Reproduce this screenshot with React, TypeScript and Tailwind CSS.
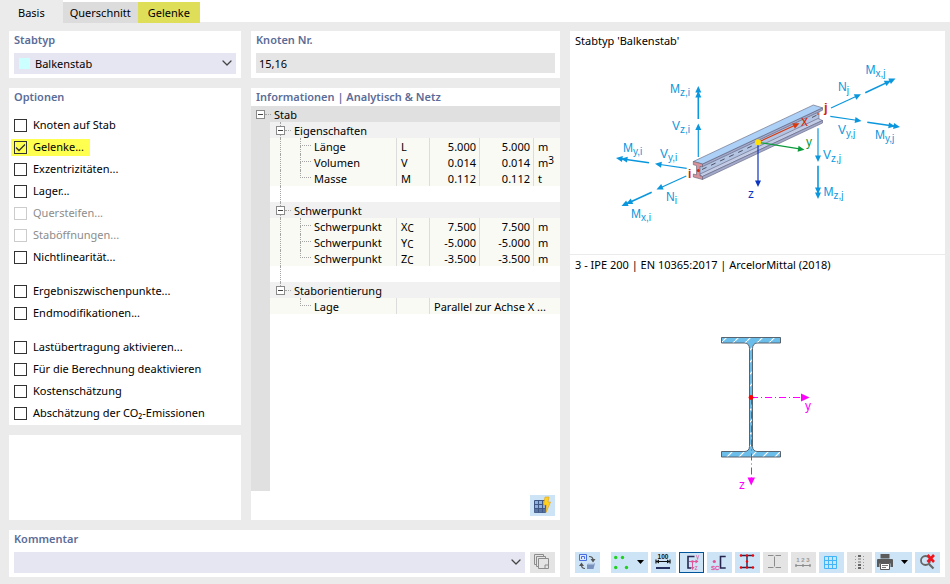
import React, { useState } from 'react';
import clsx from 'clsx';
import { ChevronDown } from 'lucide-react';

type Option = { id: string; label: string; disabled?: boolean; checked?: boolean };

const optionGroups: Option[][] = [
  [
    { id: 'nodes', label: 'Knoten auf Stab' },
    { id: 'hinges', label: 'Gelenke...', checked: true },
    { id: 'ecc', label: 'Exzentrizitäten...' },
    { id: 'support', label: 'Lager...' },
    { id: 'stiffener', label: 'Quersteifen...', disabled: true },
    { id: 'openings', label: 'Staböffnungen...', disabled: true },
    { id: 'nonlinear', label: 'Nichtlinearität...' },
  ],
  [
    { id: 'results', label: 'Ergebniszwischenpunkte...' },
    { id: 'ends', label: 'Endmodifikationen...' },
  ],
  [
    { id: 'load', label: 'Lastübertragung aktivieren...' },
    { id: 'deactivate', label: 'Für die Berechnung deaktivieren' },
    { id: 'cost', label: 'Kostenschätzung' },
    { id: 'co2', label: 'Abschätzung der CO₂-Emissionen' },
  ],
];

type InfoRow = { name: string; symbol: string; sub?: string; a: string; b: string; unit: string; sup?: string };

const infoGroups: { title: string; rows: InfoRow[] }[] = [
  {
    title: 'Eigenschaften',
    rows: [
      { name: 'Länge', symbol: 'L', a: '5.000', b: '5.000', unit: 'm' },
      { name: 'Volumen', symbol: 'V', a: '0.014', b: '0.014', unit: 'm', sup: '3' },
      { name: 'Masse', symbol: 'M', a: '0.112', b: '0.112', unit: 't' },
    ],
  },
  {
    title: 'Schwerpunkt',
    rows: [
      { name: 'Schwerpunkt', symbol: 'X', sub: 'C', a: '7.500', b: '7.500', unit: 'm' },
      { name: 'Schwerpunkt', symbol: 'Y', sub: 'C', a: '-5.000', b: '-5.000', unit: 'm' },
      { name: 'Schwerpunkt', symbol: 'Z', sub: 'C', a: '-3.500', b: '-3.500', unit: 'm' },
    ],
  },
];

function Panel({ className, children }: { className?: string; children?: React.ReactNode }) {
  return <section className={clsx('bg-white', className)}>{children}</section>;
}

function Heading({ children }: { children: React.ReactNode }) {
  return <h2 className="flex h-[18px] items-center px-[5px] font-semibold text-[#5b6c98]">{children}</h2>;
}

function OptionRow({ option }: { option: Option }) {
  const [checked, setChecked] = useState(!!option.checked);
  return (
    <div className="flex h-[22px] items-center">
      <label
        className={clsx(
          'flex h-[17px] items-center gap-[6px] pr-[6px] pl-[3px]',
          option.checked && 'bg-[#ffff4f]',
          option.disabled && 'text-[#8c8c8c]',
        )}
      >
        <span className="relative flex">
          <input
            type="checkbox"
            disabled={option.disabled}
            checked={checked}
            onChange={(e) => setChecked(e.target.checked)}
            className="peer size-[13px] appearance-none border border-[#333] disabled:border-[#ccc]"
          />
          <svg viewBox="0 0 13 13" className="pointer-events-none absolute inset-0 hidden size-[13px] peer-checked:block">
            <path d="M2 6.5 5 9.5 11 3.5" fill="none" stroke="#333" strokeWidth="1.3" />
          </svg>
        </span>
        {option.label}
      </label>
    </div>
  );
}

function Chevron() {
  return (
    <ChevronDown
      className="pointer-events-none absolute top-[2px] right-px size-4"
      strokeWidth={1.9}
      color="#444"
    />
  );
}

/* ---------- property tree ---------- */

function Minus() {
  return (
    <span className="flex size-[9px] items-center border border-[#8a8a8a] bg-white px-px">
      <span className="h-px w-full bg-[#444]" />
    </span>
  );
}

function GroupRow({ title, last }: { title: string; last?: boolean }) {
  return (
    <tr>
      <td className="bg-[#e0e0e0] p-0" />
      <th colSpan={5} className="bg-[#f1f1f1] p-0 text-left font-normal">
        <div className="flex h-4 items-center pl-[6px]">
          <span className="flex h-4 flex-col items-center">
            <span className="h-1 border-l border-dotted border-[#a5a5a5]" />
            <Minus />
            {!last && <span className="h-[3px] border-l border-dotted border-[#a5a5a5]" />}
          </span>
          <span className="mr-[3px] w-[6px] border-b border-dotted border-[#a5a5a5]" />
          <span className="self-start">{title}</span>
        </div>
      </th>
    </tr>
  );
}

function Branch({ trunk, last }: { trunk: boolean; last: boolean }) {
  return (
    <span className="flex h-4 pl-[10px]">
      <span className={clsx('w-5 border-l border-dotted', trunk ? 'border-[#a5a5a5]' : 'border-transparent')} />
      <span className="mr-[3px] w-[11px]">
        <span className="block h-2 border-b border-l border-dotted border-[#a5a5a5]" />
        {!last && <span className="block h-2 border-l border-dotted border-[#a5a5a5]" />}
      </span>
    </span>
  );
}

const dataCell = 'border-l border-[#dcdcdc] bg-[#f9faf4] p-0';

function InfoTable() {
  return (
    <table className="w-full table-fixed border-separate border-spacing-0 leading-[18px]">
      <colgroup>
        <col className="w-[19px]" />
        <col />
        <col className="w-[33px]" />
        <col className="w-[50px]" />
        <col className="w-[54px]" />
        <col className="w-[27px]" />
      </colgroup>
      <tbody>
        <tr>
          <th colSpan={6} className="bg-[#e0e0e0] p-0 text-left font-normal">
            <div className="flex h-4 items-center pl-[5px]">
              <Minus />
              <span className="mr-[3px] w-[6px] border-b border-dotted border-[#a5a5a5]" />
              <span className="self-start">Stab</span>
            </div>
          </th>
        </tr>
        {infoGroups.map((group) => (
          <React.Fragment key={group.title}>
            <GroupRow title={group.title} />
            {group.rows.map((row, i) => (
              <tr key={row.symbol}>
                <td className="bg-[#e0e0e0] p-0" />
                <td className="bg-[#f9faf4] p-0">
                  <div className="flex h-4">
                    <Branch trunk last={i === group.rows.length - 1} />
                    {row.name}
                  </div>
                </td>
                <td className={dataCell}>
                  <div className="flex h-4 pl-1">
                    {row.symbol}
                    {row.sub && <span className="pt-px text-[10px]">{row.sub}</span>}
                  </div>
                </td>
                <td className={clsx(dataCell, 'text-right')}>
                  <div className="h-4 pr-[3px]">{row.a}</div>
                </td>
                <td className={clsx(dataCell, 'text-right')}>
                  <div className="h-4 pr-[3px]">{row.b}</div>
                </td>
                <td className={dataCell}>
                  <div className="flex h-4 pl-1">
                    {row.unit}
                    {row.sup && <span className="text-[10px] leading-3">{row.sup}</span>}
                  </div>
                </td>
              </tr>
            ))}
            <tr>
              <td className="bg-[#e0e0e0] p-0" />
              <td colSpan={5} className="p-0">
                <div className="h-4 pl-[10px]">
                  <span className="block h-4 border-l border-dotted border-[#a5a5a5]" />
                </div>
              </td>
            </tr>
          </React.Fragment>
        ))}
        <GroupRow title="Staborientierung" last />
        <tr>
          <td className="bg-[#e0e0e0] p-0" />
          <td className="bg-[#f9faf4] p-0">
            <div className="flex h-4">
              <Branch trunk={false} last />
              Lage
            </div>
          </td>
          <td className={dataCell} />
          <td colSpan={3} className={dataCell}>
            <div className="h-4 pl-1 whitespace-nowrap">Parallel zur Achse X ...</div>
          </td>
        </tr>
      </tbody>
    </table>
  );
}

/* ---------- drawings ---------- */

type ArrowProps = { from: [number, number]; to: [number, number]; double?: boolean; color?: string };

function Arrow({ from, to, double, color = '#0b97dd' }: ArrowProps) {
  const [x1, y1] = from;
  const [x2, y2] = to;
  const len = Math.hypot(x2 - x1, y2 - y1);
  const ux = (x2 - x1) / len;
  const uy = (y2 - y1) / len;
  const head = (back: number) => {
    const tx = x2 - ux * back;
    const ty = y2 - uy * back;
    const bx = tx - ux * 6.5;
    const by = ty - uy * 6.5;
    return `${tx},${ty} ${bx - uy * 3},${by + ux * 3} ${bx + uy * 3},${by - ux * 3}`;
  };
  return (
    <g fill={color}>
      <line x1={x1} y1={y1} x2={x2 - ux * 5} y2={y2 - uy * 5} stroke={color} strokeWidth={double ? 1.6 : 1.2} />
      <polygon points={head(0)} />
      {double && <polygon points={head(5)} />}
    </g>
  );
}

const forces: (ArrowProps & { name: string; index: string; at: [number, number] })[] = [
  { name: 'M', index: 'z,i', at: [670, 93], from: [698.3, 119], to: [698.3, 86], double: true },
  { name: 'V', index: 'z,i', at: [672, 130], from: [698.3, 157], to: [698.3, 123.5] },
  { name: 'M', index: 'y,i', at: [623, 152], from: [649, 162.7], to: [616, 158], double: true },
  { name: 'V', index: 'y,i', at: [660, 158], from: [686.7, 168.3], to: [655, 163.8] },
  { name: 'N', index: 'i', at: [666, 201], from: [686.3, 176], to: [656.5, 189.5] },
  { name: 'M', index: 'x,i', at: [631, 218], from: [651.7, 192.3], to: [621.5, 206], double: true },
  { name: 'N', index: 'j', at: [838, 90.5], from: [831, 108], to: [861, 94.2] },
  { name: 'M', index: 'x,j', at: [865.5, 74], from: [865.3, 92.7], to: [895.5, 78.5], double: true },
  { name: 'V', index: 'y,j', at: [838, 134], from: [830.3, 116.3], to: [861.5, 121] },
  { name: 'M', index: 'y,j', at: [875, 139], from: [867.3, 122.3], to: [900, 127], double: true },
  { name: 'V', index: 'z,j', at: [823, 158.5], from: [818, 128.3], to: [818, 162] },
  { name: 'M', index: 'z,j', at: [823.5, 195.5], from: [818, 165.7], to: [818, 199], double: true },
];

function BeamDrawing() {
  return (
    <svg viewBox="570 51 375 203" className="h-[203px] w-full font-['Liberation_Sans']">
      <g stroke="#5c6079" strokeWidth="0.6" strokeLinejoin="round">
        <polygon points="699,165.5 699,176 819,120 819,109.5" fill="#b3c4e2" />
        <polygon points="699,174.5 702.5,176.5 822.5,120.5 818,118.5" fill="#c3cce6" />
        <polygon points="702.5,176.5 702.5,179.5 822.5,123 822.5,120.5" fill="#a3a9cb" />
        <polygon points="702.5,164 702.5,166.6 822.5,110.2 822.5,107.8" fill="#a3a9cb" />
        <polygon points="693.3,161.5 702.5,164 822.5,107.8 813.3,105" fill="#add0f7" />
        <polygon
          points="693.3,161.5 702.5,164 702.5,167 700,166.4 700,175.8 702.5,176.6 702.5,179.5 693.3,177 693.3,174 696.5,174.8 696.5,165.6 693.3,164.7"
          fill="#d7929a"
        />
      </g>
      <path d="M702 169.5 752 146M812 117.5 817 115" stroke="#4d5268" strokeDasharray="5 5" />
      <circle cx="698.3" cy="170.4" r="1.5" fill="#d22b0c" />
      <circle cx="818" cy="114" r="1.1" fill="#e2572f" />

      {forces.map(({ name, index, at, ...arrow }) => (
        <g key={name + index}>
          <Arrow {...arrow} />
          <text x={at[0]} y={at[1]} fontSize="12" fill="#0b97dd">
            {name}
            <tspan dy="3" fontSize="10">{index}</tspan>
          </text>
        </g>
      ))}

      <Arrow from={[758, 142.3]} to={[799.5, 123.2]} color="#d83a10" />
      <Arrow from={[758, 142.3]} to={[804.5, 149.7]} color="#0c9a3c" />
      <Arrow from={[758, 142.3]} to={[758, 187]} color="#0d35c0" />
      <circle cx="758" cy="142.3" r="3" fill="#ffe000" />
      <g fontSize="12">
        <text x="688" y="178" fontWeight="bold" fill="#d22b0c">i</text>
        <text x="824" y="112" fontSize="13" fontWeight="bold" fill="#d22b0c">j</text>
        <text x="801" y="126" fontSize="14" fill="#d22b0c">x</text>
        <text x="806" y="146" fill="#0c9a3c">y</text>
        <text x="748" y="198" fill="#0d35c0">z</text>
      </g>
    </svg>
  );
}

const sectionPath =
  'M721.5 337.5H780.5V343H757Q752.7 343.5 752.5 348.5V446.5Q752.7 451 757 451.5H780.5V457H721.5V451.5H745Q749.3 451 749.5 446.5V348.5Q749.3 343.5 745 343H721.5Z';

function SectionDrawing() {
  return (
    <svg viewBox="570 275 375 277" className="h-[277px] w-full font-['Liberation_Sans']">
      <defs>
        <pattern id="hatch" width="12" height="12" patternUnits="userSpaceOnUse" patternTransform="translate(3 5)">
          <rect width="12" height="12" fill="#6bbdea" />
          <path d="M-1 13 13 -1" stroke="#fff" strokeWidth="1.2" />
        </pattern>
      </defs>
      <path d={sectionPath} fill="url(#hatch)" stroke="#4c5660" strokeWidth="0.9" />
      <g stroke="#ff00ff" fill="none" strokeDasharray="7 3 1 3">
        <path d="M751 397.5H801" />
        <path d="M751.5 397.5V478" />
      </g>
      <g fill="#ff00ff">
        <polygon points="801,393.5 809.5,397.5 801,401.5" />
        <polygon points="747.5,477.5 755,477.5 751.2,485.5" />
        <text x="805" y="410" fontSize="12">y</text>
        <text x="739" y="489" fontSize="12">z</text>
      </g>
      <circle cx="751" cy="397.5" r="2.4" fill="#f00" />
    </svg>
  );
}

/* ---------- toolbar ---------- */

type ToolProps = { label: string; wide?: boolean; off?: boolean; pressed?: boolean; children: React.ReactNode };

function Tool({ label, wide, off, pressed, children }: ToolProps) {
  return (
    <button
      type="button"
      aria-label={label}
      disabled={off}
      aria-pressed={pressed}
      className={clsx(
        'h-[21px] shrink-0',
        wide ? 'w-[37px]' : 'w-[25px]',
        off ? 'bg-[#e4e4e4]' : 'bg-[#cde4f7]',
        pressed && 'outline-1 -outline-offset-1 outline-[#005499]',
      )}
    >
      <svg viewBox={wide ? '0 0 37 21' : '0 0 25 21'} fill="none" className="size-full font-['Liberation_Sans']">
        {children}
      </svg>
    </button>
  );
}

function Toolbar() {
  return (
    <div className="flex gap-[3px] px-[5px]">
      <Tool label="Ansicht wechseln">
        <path d="M4.5 2.5h7v6h-7z" fill="#dbe8fb" stroke="#4a6ee0" />
        <path d="M6.5 7v-2.5h3v2.5" stroke="#4a6ee0" />
        <path d="M14 4.5q4 0 4 3.5M6.5 13q0 3.5 3.5 3.5" stroke="#555" strokeWidth="1.2" />
        <path d="M15.5 7h5L18 10.5zM4 14h5l-2.5-3.5z" fill="#555" />
        <path d="m12 12.5 2-1.5h6l-1.5 6h-6.5z" fill="#7892bd" />
        <path d="m12 12.5 2-1.5h6l-1.5 1.5z" fill="#c2d2ea" />
      </Tool>
      <div className="ml-auto flex gap-[3px]">
        <Tool label="Spannungspunkte" wide>
          <g fill="#1fd01f">
            <circle cx="4.7" cy="5.5" r="1.7" />
            <circle cx="11.5" cy="5.5" r="1.7" />
            <circle cx="4.7" cy="15.5" r="1.7" />
            <circle cx="15.5" cy="15.5" r="1.7" />
          </g>
          <path d="M26 8h7l-3.5 4z" fill="#000" />
        </Tool>
        <Tool label="Bemaßung">
          <text x="12" y="7" fontSize="6.5" fontWeight="bold" textAnchor="middle" fill="#111">100</text>
          <path d="M5 9.5h14M5 7.5v4M19 7.5v4" stroke="#111" strokeWidth="1.2" />
          <path d="m5 9.5 3-2v4zM19 9.5l-3-2v4z" fill="#111" />
          <path d="M5 16h14" stroke="#26315f" strokeWidth="2" />
        </Tool>
        <Tool label="Hauptachsen" pressed>
          <path d="M15.5 4.5H9v11.5h3" stroke="#26264f" strokeWidth="1.6" />
          <path d="M10 9.5h8M13.5 9.5v6" stroke="#e0559a" />
          <path d="m19.5 9.5-3-2v4zM13.500 18l-2-3h4z" fill="#e0559a" />
          <circle cx="13.5" cy="9.5" r="1.3" fill="#e0559a" />
          <text x="17" y="7" fontSize="6.5" fill="#e0559a">y</text>
          <text x="15.5" y="18" fontSize="6.5" fill="#e0559a">z</text>
        </Tool>
        <Tool label="Schubmittelpunkt">
          <path d="M18.7 4.500h-5.200v11.500h5.200" stroke="#26264f" strokeWidth="1.6" />
          <circle cx="7.3" cy="9.5" r="1.6" fill="#e0559a" />
          <text x="4" y="18" fontSize="6" fill="#e0559a" stroke="#e0559a" strokeWidth="0.3">SC</text>
        </Tool>
        <Tool label="Profilpunkte">
          <path d="M5.5 3.5h13M5.5 15.5h13M12 3.5v12" stroke="#26264f" strokeWidth="1.4" />
          <g fill="#f00">
            <circle cx="6" cy="3.5" r="1.2" />
            <circle cx="12" cy="3.5" r="1.2" />
            <circle cx="18" cy="3.5" r="1.2" />
            <circle cx="12" cy="9.5" r="1.2" />
            <circle cx="6" cy="15.5" r="1.2" />
            <circle cx="12" cy="15.5" r="1.2" />
            <circle cx="18" cy="15.5" r="1.2" />
          </g>
        </Tool>
        <Tool label="Profilteile" off>
          <path d="M5 3.5h5.500M12.500 3.5h5.500M5 15.5h5.500M12.500 15.5h5.500M11.5 4.500v10" stroke="#8c8c8c" />
        </Tool>
        <Tool label="Nummerierung" off>
          <text x="12" y="10" fontSize="6" fontWeight="bold" textAnchor="middle" fill="#999">1 2 3</text>
          <path d="M4.5 13.5h15" stroke="#8c8c8c" />
          <path d="M5 12v3M12 12v3M19 12v3" stroke="#8c8c8c" strokeWidth="1.2" />
        </Tool>
        <Tool label="Raster">
          <path d="M5.5 4.5h12v12h-12zM9.5 4.5v12M13.5 4.5v12M5.5 8.5h12M5.5 12.5h12" stroke="#42b4f8" />
        </Tool>
        <Tool label="Wertetabelle" off>
          <path d="M8.5 4v14M16.5 4v14" stroke="#999" strokeDasharray="1 2" />
          <path d="M12.5 3v2M12.5 12v2M12.5 15v2" stroke="#666" strokeWidth="3" />
          <path d="M12.5 6v2M12.5 9v2" stroke="#aaa" strokeWidth="3" />
        </Tool>
        <Tool label="Drucken" wide>
          <path d="M5.5 2h9v4.500h-9zM2 8q0-1 1-1h14q1 0 1 1v7h-2.500v-3.500h-11v3.500H2z" fill="#5a5a5a" />
          <path d="M5.5 11.5h9v6h-9z" fill="#fff" stroke="#5a5a5a" />
          <path d="M7 13.5h6M7 15.5h4" stroke="#777" />
          <path d="M26 8h7l-3.5 4z" fill="#000" />
        </Tool>
        <Tool label="Auswahl aufheben">
          <circle cx="10.5" cy="8.5" r="4.5" stroke="#666" strokeWidth="1.8" />
          <path d="m14 12 4.5 4.5" stroke="#666" strokeWidth="2.200" />
          <path d="m12.5 3 6.5 7M19 3l-6.5 7" stroke="#f0141e" strokeWidth="2.600" />
        </Tool>
      </div>
    </div>
  );
}

export default function App() {
  return (
    <main className="min-h-screen bg-[#ebebeb] font-['Noto_Sans',sans-serif] text-[11px] leading-4 text-black">
      <nav className="flex h-[22px] items-end bg-white">
        <button type="button" className="h-[22px] bg-[#ebebeb] px-[18px] pt-1">Basis</button>
        <button type="button" className="-mb-px h-[21px] bg-[#dcdcdc] px-[7px]">Querschnitt</button>
        <button type="button" className="-mb-px h-[21px] bg-[#dfde58] px-[10px]">Gelenke</button>
      </nav>

      <div className="grid grid-cols-[232fr_309fr_375fr] gap-[10px] pt-[9px] pr-[5px] pb-[7px] pl-[9px]">
        <div className="flex flex-col gap-[10px]">
          <Panel className="pb-1">
            <Heading>Stabtyp</Heading>
            <div className="relative mx-[5px] mt-1 flex">
              <select aria-label="Stabtyp" className="h-[21px] w-full appearance-none bg-[#e6e6f2] pl-[21px]">
                <option>Balkenstab</option>
              </select>
              <span className="pointer-events-none absolute top-[5px] left-[5px] size-[11px] bg-[#ccffff]" />
              <Chevron />
            </div>
          </Panel>
          <Panel className="pb-px">
            <Heading>Optionen</Heading>
            <div className="mt-2 flex flex-col gap-3 pl-[2px]">
              {optionGroups.map((group, i) => (
                <div key={i}>
                  {group.map((option) => (
                    <OptionRow key={option.id} option={option} />
                  ))}
                </div>
              ))}
            </div>
          </Panel>
          <Panel className="min-h-[85px] flex-1" />
        </div>

        <div className="flex flex-col gap-[10px]">
          <Panel className="pb-[5px]">
            <Heading>Knoten Nr.</Heading>
            <div className="mx-[5px] mt-1 flex">
              <input aria-label="Knoten Nr." readOnly value="15,16" className="h-5 w-full bg-[#e5e5e5] px-[3px]" />
            </div>
          </Panel>
          <Panel className="flex flex-1 flex-col">
            <Heading>Informationen | Analytisch &amp; Netz</Heading>
            <InfoTable />
            <div className="w-[19px] flex-1 bg-[#e0e0e0]" />
            <div className="flex justify-end px-[5px] py-1">
              <Tool label="Netz berechnen">
                <path d="M4.5 5.5h11v12h-11z" fill="#8fb0dc" stroke="#3f5785" />
                <path d="M4.5 13.5h11v4h-11z" fill="#56749f" />
                <path d="M8.5 5.5v12M12.5 5.5v12M4.5 9.5h11M4.5 13.5h11" stroke="#3f5785" />
                <path d="M15 2h4l-1 5h2.500l-4.500 10.500.5-7.500h-3z" fill="#ffd21e" stroke="#e0a010" strokeWidth="0.6" />
              </Tool>
            </div>
          </Panel>
        </div>

        <Panel className="row-span-2 flex flex-col pb-1">
          <h2 className="flex h-5 items-center px-[5px]">Stabtyp 'Balkenstab'</h2>
          <BeamDrawing />
          <h2 className="flex h-[21px] items-center border-t border-[#ebebeb] px-[5px]">
            3 - IPE 200 | EN 10365:2017 | ArcelorMittal (2018)
          </h2>
          <SectionDrawing />
          <Toolbar />
        </Panel>

        <Panel className="col-span-2 pb-1">
          <Heading>Kommentar</Heading>
          <div className="mx-[5px] mt-1 flex gap-[5px]">
            <div className="relative flex flex-1">
              <select aria-label="Kommentar" className="h-[21px] w-full appearance-none bg-[#e6e6f2] pl-[5px]">
                <option></option>
              </select>
              <Chevron />
            </div>
            <Tool label="Kommentare" off>
              <path d="M6 12.5h-1.5v-10h9v1.500M8.5 14.5h-2v-10h9v1.500" stroke="#8c8c8c" />
              <path d="M8.5 6.5h10v10h-10zM15 16v-3h3" stroke="#8c8c8c" />
            </Tool>
          </div>
        </Panel>
      </div>
    </main>
  );
}
